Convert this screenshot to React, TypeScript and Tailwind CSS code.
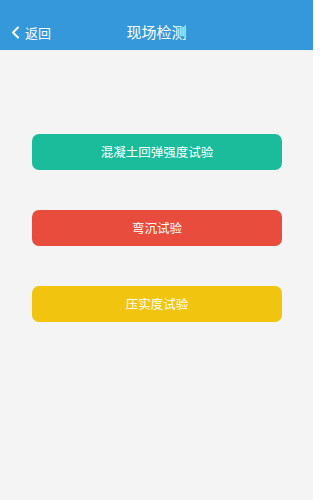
import React from "react";

const font = { fontFamily: '"Noto Sans CJK SC", "Noto Sans", sans-serif' };

export default function App() {
  const items = [
    { label: "混凝土回弹强度试验", cls: "bg-[#1abc9c]" },
    { label: "弯沉试验", cls: "bg-[#e74c3c]" },
    { label: "压实度试验", cls: "bg-[#f1c40f]" },
  ];
  return (
    <div className="w-[313px] h-[500px] bg-[#f4f4f4] flex flex-col" style={font}>
      <div className="h-[50px] bg-[#3498db] flex items-center relative pt-[15px] shrink-0">
        <div className="flex items-center pl-[11px] text-white text-[13px] gap-[5px]">
          <svg width="9" height="13" viewBox="0 0 9 13" fill="none">
            <path d="M7 1.5 L2 6.5 L7 11.5" stroke="white" strokeWidth="2" strokeLinecap="round" strokeLinejoin="round" />
          </svg>
          <span>返回</span>
        </div>
        <div className="absolute left-0 right-0 top-[15px] bottom-0 flex items-center justify-center text-white text-[15px] pointer-events-none">
          现场检测
        </div>
      </div>
      <div className="flex flex-col gap-[40px] pl-[32px] pr-[31px] pt-[84px]">
        {items.map((it) => (
          <div
            key={it.label}
            className={`${it.cls} h-[36px] rounded-[7px] flex items-center justify-center text-white text-[12.5px]`}
          >
            {it.label}
          </div>
        ))}
      </div>
    </div>
  );
}
